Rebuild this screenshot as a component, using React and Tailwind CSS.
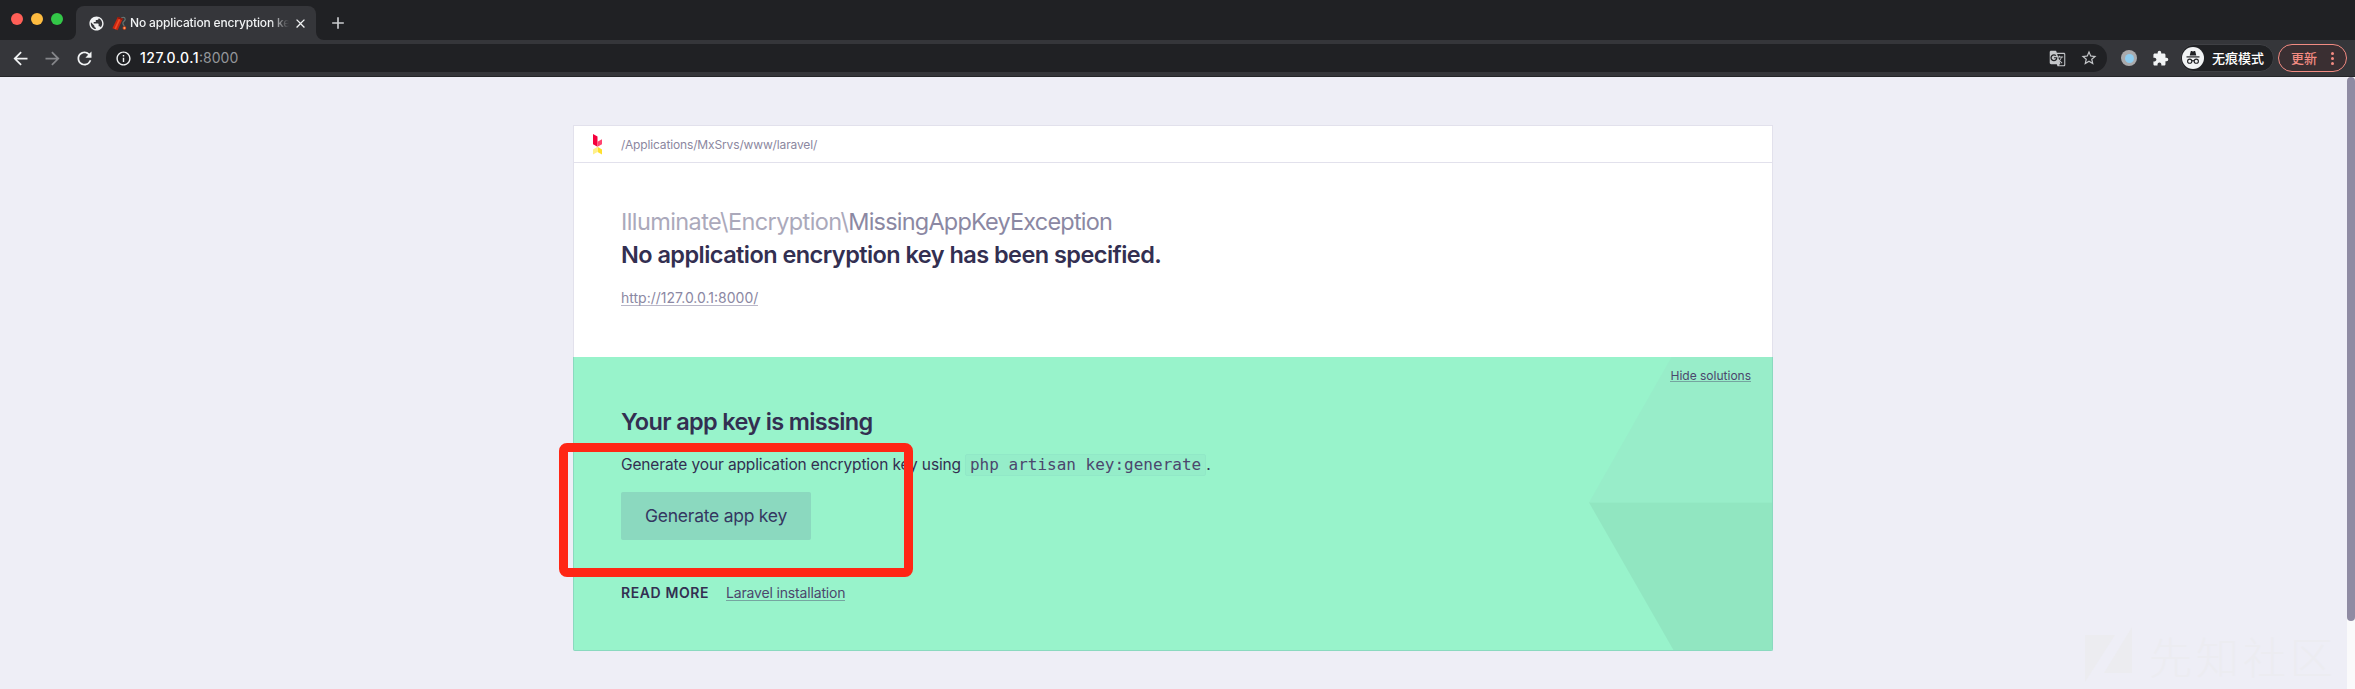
import {
  MdAdd,
  MdArrowBack,
  MdArrowForward,
  MdClose,
  MdExtension,
  MdGTranslate,
  MdInfoOutline,
  MdPublic,
  MdRefresh,
  MdStarBorder,
} from "react-icons/md";

function Firecracker() {
  return (
    <svg width="15" height="15" viewBox="0 0 15 15" className="shrink-0">
      <path d="M8.500 3C10 .8 13 .8 13.200 3.200c.1 2-2.600 2.200-2.300 4.200.1 1 .8 1.600 1.400 2.400" fill="none" stroke="#66726f" strokeWidth="1.200" />
      <path d="M5.800 1 10.800 2.800 5.600 14.300.4 12.300z" fill="#c9260f" />
      <path d="M7.200 1.900 8.900 2.500 3.900 13.300 2.300 12.700z" fill="#ec4a28" />
      <path d="M5.800 1 10.800 2.800 10.200 4.200 5.200 2.300z" fill="#8d1a0d" />
      <circle cx="12.400" cy="12" r="1.800" fill="#ee4a1d" />
      <circle cx="12.400" cy="12" r=".8" fill="#ffd08a" />
    </svg>
  );
}

function Incognito() {
  return (
    <svg width="22" height="22" viewBox="0 0 22 22" className="shrink-0">
      <circle cx="11" cy="11" r="11" fill="#f1f3f4" />
      <path d="M7.700 8.400 8.700 4.400c.1-.5.6-.6 1-.4l1.300.4 1.300-.4c.4-.2.9-.1 1 .4l1 4z" fill="#202124" />
      <path d="M4.500 9.300h13v1.200h-13z" fill="#202124" />
      <g fill="none" stroke="#202124" strokeWidth="1.100">
        <circle cx="7.700" cy="14.200" r="2.100" />
        <circle cx="14.300" cy="14.200" r="2.100" />
        <path d="M9.800 14c.7-.5 1.700-.5 2.400 0" />
      </g>
    </svg>
  );
}

function FlareLogo() {
  return (
    <svg width="9" height="21" viewBox="0 0 9 21" className="shrink-0">
      <path d="M0 0 4.500 2.600V12.800L0 10.200z" fill="#f5003d" />
      <path d="M4.500 7.800 9 5.200v5L4.500 12.800z" fill="#ff4470" />
      <path d="M4.500 12.800 9 15.400V20.500L4.500 17.900z" fill="#ffe02e" />
      <path d="M4.500 12.800 0 15.400V20.500L4.500 17.900z" fill="#fff08a" />
    </svg>
  );
}

function TabStrip() {
  return (
    <div className="flex h-10 items-end bg-[#202124]">
      <div className="flex h-10 w-[68px] items-center gap-2 pl-[11px] pb-[2px]">
        <span className="size-3 rounded-full bg-[#ff5f57]" />
        <span className="size-3 rounded-full bg-[#febc40]" />
        <span className="size-3 rounded-full bg-[#33c748]" />
      </div>
      <svg width="8" height="8" className="shrink-0"><path d="M8 0v8H0a8 8 0 0 0 8-8" fill="#35363a" /></svg>
      <div className="flex h-[34px] w-60 items-center rounded-t-lg bg-[#35363a] pl-3 text-[#f1f3f4]">
        <MdPublic size={17} className="shrink-0" />
        <div className="ml-[7px] flex w-[177px] items-center overflow-hidden whitespace-nowrap [mask-image:linear-gradient(to_right,black_158px,transparent_177px)]">
          <Firecracker />
          <span className="ml-[3px] text-xs font-medium tracking-[-0.15px]">No application encryption ke</span>
        </div>
        <MdClose size={15} className="ml-[4px] shrink-0" />
      </div>
      <svg width="8" height="8" className="shrink-0"><path d="M0 0v8h8a8 8 0 0 1-8-8" fill="#35363a" /></svg>
      <div className="flex h-[34px] items-center pl-1">
        <MdAdd size={20} className="text-[#c9cbce]" />
      </div>
    </div>
  );
}

function Toolbar() {
  return (
    <div className="flex h-[37px] items-center border-b border-[#242528] bg-[#35363a] text-[#f1f3f4]">
      <div className="flex w-[106px] shrink-0 items-center gap-[11px] pl-[10px]">
        <MdArrowBack size={21} />
        <MdArrowForward size={21} className="text-[#85868a]" />
        <MdRefresh size={21} />
      </div>
      <div className="flex h-7 w-[2001px] shrink-0 items-center rounded-full bg-[#202124] pr-[9px] pl-[9px]">
        <MdInfoOutline size={17} />
        <div className="ml-[8px] flex-1 text-sm leading-5">
          <span className="font-medium tracking-[0.5px] text-white">127.0.0.1</span>
          <span className="text-[#94969a]">:8000</span>
        </div>
        <MdGTranslate size={17} className="text-[#c4c6c9]" />
        <MdStarBorder size={18} className="ml-[14px] text-[#c4c6c9]" />
      </div>
      <span className="ml-[14px] flex size-4 shrink-0 items-center justify-center rounded-full bg-[#aaaaac]">
        <span className="size-[9px] rounded-full bg-[#8ecdf0]" />
      </span>
      <MdExtension size={17} className="ml-[15px] shrink-0" />
      <div className="ml-[11px] flex h-7 w-[94px] shrink-0 items-center gap-2 rounded-full border border-[#3f4044] bg-[#202124] pl-px font-['Noto_Sans_CJK_SC',sans-serif] text-[13px] leading-5 font-medium text-white">
        <Incognito />
        <span className="whitespace-nowrap">无痕模式</span>
      </div>
      <div className="ml-1 flex h-7 w-[69px] shrink-0 items-center justify-between rounded-full border border-[#f28b82] bg-[#3a2f32] pr-3 pl-3 font-['Noto_Sans_CJK_SC',sans-serif] text-[13px] leading-5 font-medium text-[#f28b82]">
        <span>更新</span>
        <span className="flex flex-col gap-[2px]">
          <span className="size-[3px] rounded-full bg-[#f28b82]" />
          <span className="size-[3px] rounded-full bg-[#f28b82]" />
          <span className="size-[3px] rounded-full bg-[#f28b82]" />
        </span>
      </div>
    </div>
  );
}

function ErrorSummary() {
  return (
    <section className="h-[232px] border border-b-0 border-[#e2e1ec] bg-white">
      <div className="flex h-[37px] items-center border-b border-[#e2e1ec] pl-[19px]">
        <FlareLogo />
        <span className="mt-[2px] ml-[19px] text-xs tracking-[-0.14px] text-[#8b87a0]">/Applications/MxSrvs/www/laravel/</span>
      </div>
      <div className="pt-[42px] pl-[47px]">
        <h1 className="text-[23.5px] leading-[33px] whitespace-nowrap text-[#8b88a3]">
          <span className="tracking-[-0.59px] text-[#aba9bb]">Illuminate\Encryption\</span>
          <span className="tracking-[-0.8px]">MissingAppKeyException</span>
        </h1>
        <p className="text-[23.5px] leading-[33px] font-semibold tracking-[-0.55px] text-[#332f51]">
          No application encryption key has been specified.
        </p>
        <a className="mt-[18px] inline-block h-[17px] border-b border-[#b9b7c8] text-sm leading-[17px] text-[#8b88a3]">http://127.0.0.1:8000/</a>
      </div>
    </section>
  );
}

function Solution() {
  return (
    <section className="relative h-[294px] overflow-hidden rounded-b-xs border border-t-0 border-[#8ad9bf] bg-[#98f3cb] text-[#332f51]">
      <svg width="183" height="294" className="absolute top-0 right-0">
        <path d="M0 145.500 82.500 0H183V145.500z" fill="#98edc9" />
        <path d="M0 145.500H183V294H85z" fill="#91e6c1" />
      </svg>
      <div className="relative flex h-[47px] justify-end pt-[11px] pr-[21px]">
        <a className="h-[14px] border-b border-[#75a5a0] text-xs leading-[15px] text-[#4b476d]">Hide solutions</a>
      </div>
      <div className="relative pl-[47px]">
        <h2 className="text-[23.5px] leading-9 font-semibold tracking-[-0.65px]">Your app key is missing</h2>
        <p className="mt-[12px] flex h-[26px] items-center text-[15.5px]">
          <span className="tracking-[-0.13px]">Generate your application encryption key using</span>
          <code className="ml-[4px] flex h-[22px] items-center rounded-xs border border-[#91e8c7] bg-[#95edc9] px-1 font-['DejaVu_Sans_Mono',monospace] text-base leading-[22px] text-[#4b476d]">php artisan key:generate</code>
          <span>.</span>
        </p>
        <button className="mt-[14px] flex h-12 w-[190px] items-center justify-center rounded-xs bg-[#8bd9bf] text-[17.5px] tracking-[-0.25px] text-[#343761]">Generate app key</button>
        <div className="mt-[44px] flex text-sm leading-[18px]">
          <span className="w-[105px] font-semibold tracking-[0.6px]">READ MORE</span>
          <a className="h-[17px] border-b border-[#75a5a0] leading-[18px] tracking-[-0.16px] text-[#4b476d]">Laravel installation</a>
        </div>
      </div>
    </section>
  );
}

function Watermark() {
  return (
    <div className="absolute right-[18px] bottom-[2px] flex h-[64px] items-center gap-[16px]">
      <svg width="48" height="56" viewBox="0 0 48 56" fill="#ececf0">
        <path d="M0 8H30L0 55z" />
        <path d="M47 0V46H19z" />
      </svg>
      <span className="font-['Noto_Sans_CJK_SC',sans-serif] text-[43px] leading-[64px] font-light tracking-[4px] text-[#ececf1]">先知社区</span>
    </div>
  );
}

export default function App() {
  return (
    <div className="flex h-[689px] w-[2355px] flex-col overflow-hidden bg-[#eeeef6] font-['Inter','Noto_Sans_CJK_SC',sans-serif]">
      <TabStrip />
      <Toolbar />
      <div className="relative flex flex-1">
        <Watermark />
        <main className="relative mt-[48px] ml-[573px] w-[1200px]">
          <ErrorSummary />
          <Solution />
          <div className="absolute top-[318px] left-[-14px] h-[134px] w-[354px] rounded-lg border-[9px] border-[#ff2615]" />
        </main>
        <div className="ml-auto h-full w-2 bg-[#fafafb]">
          <div className="h-[544px] w-2 rounded-full bg-[#8f8ba3]" />
        </div>
      </div>
    </div>
  );
}
